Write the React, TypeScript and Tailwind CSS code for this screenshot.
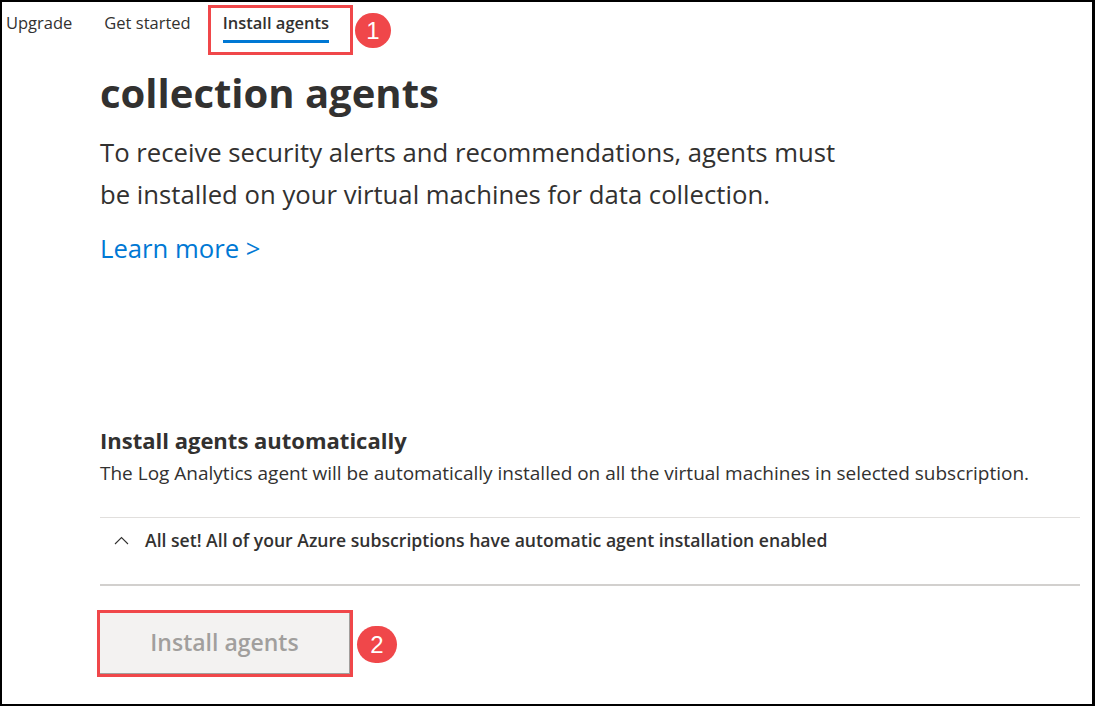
import React from "react";

export default function App() {
  return (
    <div className="relative w-[1095px] h-[706px] overflow-hidden bg-white border-2 border-r-[3px] border-black font-['Open_Sans','Noto_Sans',sans-serif] text-[#323130]">
      {/* Tabs */}
      <div className="flex items-start h-[50px] pt-[10px] pl-[4px] text-[16.5px]">
        <div className="flex flex-col">
          <span className="leading-[22px] text-[#323130]">Upgrade</span>
        </div>
        <div className="flex flex-col ml-[32px]">
          <span className="leading-[22px] text-[#323130]">Get started</span>
        </div>
        <div className="flex flex-col ml-[32px]">
          <span className="leading-[22px] font-semibold text-[#323130]">Install agents</span>
          <span className="mt-[6px] h-[3px] bg-[#0078d4]" />
        </div>
      </div>

      {/* Content */}
      <div className="pl-[98px] pr-[12px]">
        <h1 className="mt-[17px] text-[40px] leading-[48px] font-bold text-[#323130]">collection agents</h1>
        <p className="mt-[15px] text-[25.7px] leading-[42px] text-[#323130]">
          To receive security alerts and recommendations, agents must
          <br />
          be installed on your virtual machines for data collection.
        </p>
        <a className="block mt-[12px] text-[25.7px] leading-[42px] text-[#0078d4]">Learn more &gt;</a>

        <h2 className="mt-[156px] text-[22px] leading-[28px] font-bold text-[#323130]">Install agents automatically</h2>
        <p className="mt-[6px] text-[19px] leading-[26px] text-[#323130]">
          The Log Analytics agent will be automatically installed on all the virtual machines in selected subscription.
        </p>

        <div className="mt-[31px] h-px bg-[#e1dfdd]" />
        <div className="h-[66px] pt-[10px] pl-[14px] flex items-start">
          <div className="flex items-center h-[24px]">
            <svg width="15" height="9" viewBox="0 0 15 9" fill="none">
              <path d="M1 8L7.5 1.5L14 8" stroke="#323130" strokeWidth="1.1" />
            </svg>
            <span className="ml-[16px] text-[17.6px] leading-[24px] font-semibold text-[#323130]">
              All set! All of your Azure subscriptions have automatic agent installation enabled
            </span>
          </div>
        </div>
        <div className="h-[2px] bg-[#d2d0ce]" />

        <button className="mt-[26px] w-[250px] h-[62px] bg-[#f3f2f1] border-r border-b border-[#a19f9d] text-[23px] font-semibold text-[#a19f9d]">
          Install agents
        </button>
      </div>

      {/* Annotations */}
      <div className="absolute left-[95px] top-[608px] w-[256px] h-[67px] border-[3px] border-[#f0474a]" />
      <div className="absolute left-[206px] top-[3px] w-[145px] h-[50px] border-[3px] border-[#f0474a]" />
      <div className="absolute left-[353px] top-[11px] w-[36px] h-[35px] rounded-full bg-[#f0474a] flex items-center justify-center text-white text-[24px] leading-none font-['Liberation_Sans',sans-serif]">
        1
      </div>
      <div className="absolute left-[355px] top-[624px] w-[40px] h-[37px] rounded-full bg-[#f0474a] flex items-center justify-center text-white text-[24px] leading-none font-['Liberation_Sans',sans-serif]">
        2
      </div>
    </div>
  );
}
